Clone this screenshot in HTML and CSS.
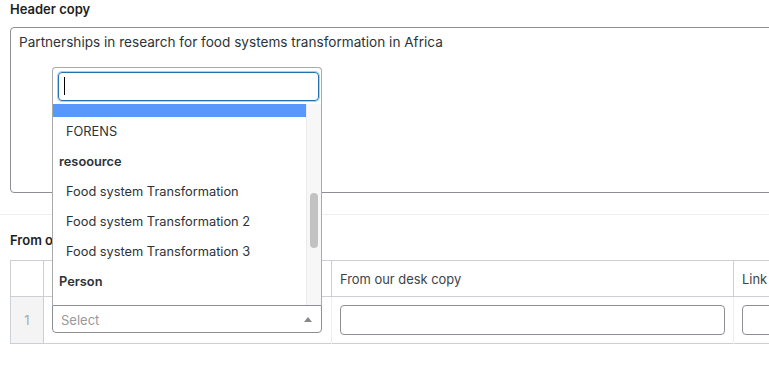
FILE: index.html
```html
<!DOCTYPE html>
<html lang="en">
<head>
    <meta charset="UTF-8">
    <title>Edit page fields</title>
    <link rel="stylesheet" href="styles.css">
</head>
<body>
    <div class="field">
        <div class="field-label">Header copy</div>
        <textarea class="textarea">Partnerships in research for food systems transformation in Africa</textarea>
    </div>

    <div class="field field-sep">
        <div class="field-label">From our desk</div>
        <table class="repeater">
            <colgroup>
                <col class="c-order">
                <col class="c-select">
                <col class="c-copy">
                <col class="c-link">
            </colgroup>
            <thead>
                <tr>
                    <th class="order"></th>
                    <th></th>
                    <th>From our desk copy</th>
                    <th>Link</th>
                </tr>
            </thead>
            <tbody>
                <tr>
                    <td class="order">1</td>
                    <td>
                        <div class="select-wrap">
                            <!-- open dropdown, shown above the select -->
                            <div class="dropdown">
                                <div class="search">
                                    <div class="search-input"><span class="caret"></span></div>
                                </div>
                                <div class="results">
                                    <ul class="options">
                                        <li class="option nested highlighted">COMESA</li>
                                        <li class="option nested">FORENS</li>
                                        <li class="option group">resoource</li>
                                        <li class="option nested">Food system Transformation</li>
                                        <li class="option nested">Food system Transformation 2</li>
                                        <li class="option nested">Food system Transformation 3</li>
                                        <li class="option group">Person</li>
                                    </ul>
                                    <div class="track"><div class="thumb"></div></div>
                                </div>
                            </div>
                            <div class="select">
                                <span class="placeholder">Select</span>
                                <span class="arrow"></span>
                            </div>
                        </div>
                    </td>
                    <td><div class="input"></div></td>
                    <td><div class="input"></div></td>
                </tr>
            </tbody>
        </table>
    </div>
</body>
</html>
```

FILE: styles.css
```css
* {
    margin: 0;
    padding: 0;
    box-sizing: border-box;
}

html,
body {
    overflow: hidden;
}

body {
    font-family: Inter, "Liberation Sans", Arial, sans-serif;
    font-size: 14px;
    color: #1e1e1e;
    background-color: #fff;
    width: 1100px;
}

/* Fields */
.field {
    padding: 0 10px 21px;
}

.field-sep {
    border-top: 1px solid #eee;
    padding-top: 16px;
}

.field-label {
    font-size: 13px;
    font-weight: 600;
    line-height: 18px;
    margin-bottom: 9px;
    color: #1e1e1e;
}

.field-sep .field-label {
    margin-bottom: 11px;
}

.textarea {
    display: block;
    width: 1000px;
    height: 166px;
    border: 1px solid #8c8f94;
    border-radius: 4px;
    padding: 4px 8px;
    font-family: inherit;
    font-size: 13.6px;
    line-height: 21px;
    color: #2c3338;
    resize: none;
    outline: none;
}

/* Repeater table */
.repeater {
    border-collapse: collapse;
    table-layout: fixed;
    width: 1024px;
    border: 1px solid #ccd0d4;
}

.c-order { width: 33px; }
.c-select { width: 288px; }
.c-copy { width: 402px; }
.c-link { width: 301px; }

.repeater th {
    height: 36px;
    padding: 1px 8px 0;
    text-align: left;
    font-size: 12.9px;
    font-weight: normal;
    color: #3c434a;
    border-left: 1px solid #ccd0d4;
    border-bottom: 1px solid #ccd0d4;
}

.repeater td {
    padding: 8px;
    vertical-align: top;
    border-left: 1px solid #eee;
}

.repeater .order {
    border-left: none;
    border-right: 1px solid #ccd0d4;
    text-align: center;
}

.repeater td.order {
    background-color: #f4f4f4;
    color: #a7aaad;
    vertical-align: middle;
    padding: 0;
    font-size: 13px;
}

.input {
    height: 30px;
    border: 1px solid #8c8f94;
    border-radius: 4px;
    background-color: #fff;
}

/* Select box */
.select-wrap {
    position: relative;
    width: 270px;
}

.select {
    height: 28px;
    border: 1px solid #8c8f94;
    border-radius: 0 0 4px 4px;
    display: flex;
    align-items: center;
    justify-content: space-between;
    padding: 1px 9px 0 8px;
    background-color: #fff;
    font-size: 13px;
}

.placeholder {
    color: #999;
}

.arrow {
    width: 0;
    height: 0;
    border-left: 4px solid transparent;
    border-right: 4px solid transparent;
    border-bottom: 5px solid #888;
}

/* Dropdown opened above */
.dropdown {
    position: absolute;
    left: 0;
    bottom: 100%;
    width: 270px;
    background-color: #fff;
    border: 1px solid #aaa;
    border-bottom: none;
    border-radius: 4px 4px 0 0;
    z-index: 10;
}

.search {
    padding: 4px 2px 3px 5px;
}

.search-input {
    height: 29px;
    border: 1px solid #2271b1;
    border-radius: 4px;
    box-shadow: 0 0 0 1px rgba(34, 113, 177, 0.35);
    padding: 4px 5px;
}

.caret {
    display: block;
    width: 1px;
    height: 18px;
    background-color: #000;
}

.results {
    display: flex;
    height: 201px;
    overflow: hidden;
}

.options {
    list-style: none;
    flex: 1;
    margin-top: -17px;
}

.option {
    padding: 6px;
    line-height: 18px;
    font-size: 12.8px;
    color: #2c3338;
    white-space: nowrap;
}

.option.nested {
    padding-left: 13px;
}

.option.group {
    font-weight: 600;
}

.option.highlighted {
    background-color: #5897fb;
    color: #fff;
    padding-top: 4px;
    padding-bottom: 8px;
}

.track {
    width: 15px;
    background-color: #f7f7f7;
    border-left: 1px solid #ebebeb;
    padding: 89px 0 0 3px;
}

.thumb {
    width: 8px;
    height: 55px;
    border-radius: 4px;
    background-color: #c2c2c2;
}
```
